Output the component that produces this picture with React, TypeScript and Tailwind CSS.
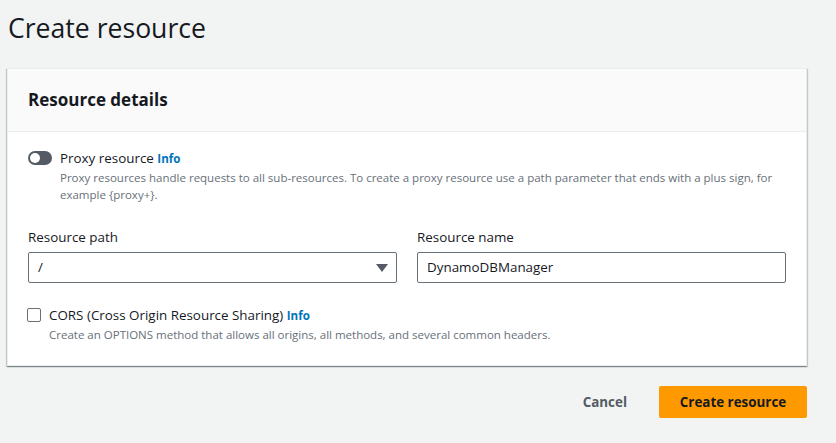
export default function App() {
  return (
    <div
      className="min-h-[443px] w-[836px] bg-[#f2f3f3] text-[#16191f]"
      style={{ fontFamily: '"Open Sans", "Noto Sans", Arial, sans-serif' }}
    >
      <h1 className="pl-2 pt-[10px] text-[26.6px] leading-[36px] font-normal">Create resource</h1>

      <div className="mt-[22px] ml-[7px] w-[800px] bg-white border border-[#eaeded] shadow-[0_1px_1px_0_rgba(0,28,36,0.3),1px_1px_1px_0_rgba(0,28,36,0.15),-1px_1px_1px_0_rgba(0,28,36,0.15)]">
        <div className="h-[63px] flex items-center px-5 bg-[#fafafa] border-b border-[#eaeded]">
          <h2 className="text-[17px] font-bold leading-[22px]">Resource details</h2>
        </div>

        <div className="px-5 pt-[17px] pb-[22px]">
          <div className="flex gap-2">
            <div className="mt-[2px] w-[24px] h-[14px] rounded-full bg-[#545b64] relative shrink-0">
              <span className="absolute left-[2px] top-[2px] w-[10px] h-[10px] rounded-full bg-white" />
            </div>
            <div>
              <div className="text-[13.4px] leading-[18px]">
                Proxy resource{" "}
                <span className="text-[11.6px] font-bold text-[#0073bb]">Info</span>
              </div>
              <p className="text-[11.5px] leading-[17px] text-[#687078] mt-[1px]">
                Proxy resources handle requests to all sub-resources. To create a proxy resource use a path parameter that ends with a plus sign, for example {"{proxy+}"}.
              </p>
            </div>
          </div>

          <div className="mt-[25px] grid grid-cols-2 gap-5">
            <div>
              <label className="block text-[13.4px] leading-[18px] mb-[6px]">Resource path</label>
              <div className="h-[31px] border border-[#687078] rounded-[2px] flex items-center justify-between pl-[9px] pr-[8px]">
                <span className="text-[13.4px]">/</span>
                <svg width="12" height="8" viewBox="0 0 12 8">
                  <path d="M0 0 H12 L6 8 Z" fill="#545b64" />
                </svg>
              </div>
            </div>
            <div>
              <label className="block text-[13.4px] leading-[18px] mb-[6px]">Resource name</label>
              <div className="h-[31px] border border-[#687078] rounded-[2px] flex items-center pl-[9px]">
                <span className="text-[13.4px]">DynamoDBManager</span>
              </div>
            </div>
          </div>

          <div className="mt-[23px] flex gap-2">
            <div className="mt-[2px] w-[14px] h-[14px] border border-[#687078] rounded-[2px] bg-white shrink-0 -ml-[1px]" />
            <div>
              <div className="text-[13.4px] leading-[18px]">
                CORS (Cross Origin Resource Sharing){" "}
                <span className="text-[11.6px] font-bold text-[#0073bb]">Info</span>
              </div>
              <p className="text-[11.5px] leading-[17px] text-[#687078] mt-[1px]">
                Create an OPTIONS method that allows all origins, all methods, and several common headers.
              </p>
            </div>
          </div>
        </div>
      </div>

      <div className="w-[807px] flex justify-end items-center gap-[12px] mt-[20px]">
        <button className="px-5 h-[32px] text-[13.4px] font-bold text-[#545b64] whitespace-nowrap">Cancel</button>
        <button className="h-[32px] w-[148px] rounded-[2px] bg-[#ff9900] text-[13.4px] font-bold text-[#16191f] whitespace-nowrap">
          Create resource
        </button>
      </div>
    </div>
  );
}
